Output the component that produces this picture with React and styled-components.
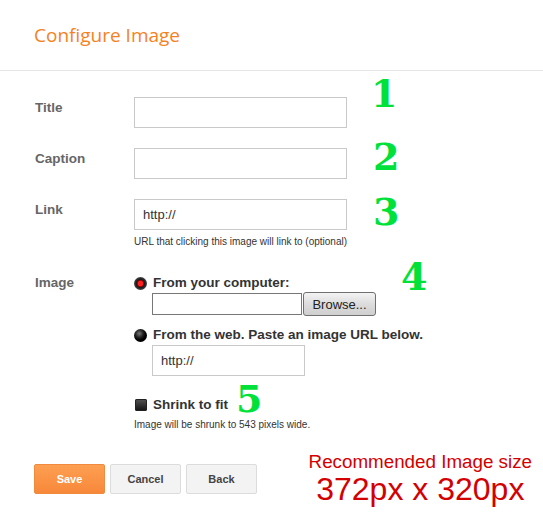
import styled, { createGlobalStyle } from "styled-components";

const GlobalStyle = createGlobalStyle`
  body {
    margin: 0;
    background: #ffffff;
    font-family: "Liberation Sans", Arial, sans-serif;
  }
`;

const App = () => {
  return (
    <Page>
      <GlobalStyle />
      <Header>
        <HeaderTitle>Configure Image</HeaderTitle>
      </Header>

      <Form>
        <Row>
          <Label>Title</Label>
          <TextInput />
        </Row>
        <Row>
          <Label>Caption</Label>
          <TextInput />
        </Row>
        <Row>
          <Label>Link</Label>
          <div>
            <TextInput defaultValue="http://" />
            <Hint>URL that clicking this image will link to (optional)</Hint>
          </div>
        </Row>
        <ImageRow>
          <Label $flat>Image</Label>
          <div>
            <Option>
              <Radio $checked />
              From your computer:
            </Option>
            <FileRow>
              <FileBox />
              <BrowseButton>Browse...</BrowseButton>
            </FileRow>
            <Option $gap={11}>
              <Radio />
              From the web. Paste an image URL below.
            </Option>
            <WebInput defaultValue="http://" />
            <Option $gap={21}>
              <Check />
              Shrink to fit
            </Option>
            <Hint $gap={6}>Image will be shrunk to 543 pixels wide.</Hint>
          </div>
        </ImageRow>
      </Form>

      <Footer>
        <Buttons>
          <Button $primary>Save</Button>
          <Button>Cancel</Button>
          <Button>Back</Button>
        </Buttons>
        <Recommend>
          <RecSmall>Recommended Image size</RecSmall>
          <RecBig>372px x 320px</RecBig>
        </Recommend>
      </Footer>

      <Marker $x={371} $y={74}>1</Marker>
      <Marker $x={373} $y={137}>2</Marker>
      <Marker $x={373} $y={192}>3</Marker>
      <Marker $x={401} $y={257}>4</Marker>
      <Marker $x={236} $y={379}>5</Marker>
    </Page>
  );
};

const Page = styled.div`
  position: relative;
  width: 543px;
  height: 521px;
  overflow: hidden;
`;

const Header = styled.div`
  height: 70px;
  border-bottom: 1px solid #e6e6e6;
  padding: 0 34px;
  display: flex;
  align-items: center;
`;

const HeaderTitle = styled.h1`
  margin: 0;
  font-family: "Open Sans", sans-serif;
  font-weight: 400;
  font-size: 19px;
  color: #f5821f;
`;

const Form = styled.div`
  padding: 26px 0 0 35px;
  display: flex;
  flex-direction: column;
  gap: 20px;
`;

const Row = styled.div`
  display: grid;
  grid-template-columns: 99px 1fr;
`;

const ImageRow = styled(Row)`
  margin-top: 7px;
`;

const Label = styled.div`
  padding-top: ${(p) => (p.$flat ? "0" : "3px")};
  font-size: 13.5px;
  line-height: 16px;
  font-weight: 700;
  color: #666666;
`;

const TextInput = styled.input`
  box-sizing: border-box;
  display: block;
  width: 213px;
  height: 31px;
  margin: 0;
  padding: 0 8px;
  border: 1px solid #c9c9c9;
  font-family: "Liberation Sans", Arial, sans-serif;
  font-size: 13px;
  color: #333333;
  outline: none;
`;

const Hint = styled.div`
  margin-top: ${(p) => p.$gap ?? 6}px;
  font-size: 10px;
  line-height: 12px;
  color: #333333;
`;

const Option = styled.div`
  display: flex;
  align-items: center;
  gap: 6px;
  margin-top: ${(p) => p.$gap ?? 0}px;
  font-size: 13.5px;
  line-height: 16px;
  font-weight: 700;
  color: #333333;
`;

const Radio = styled.span`
  width: 13px;
  height: 13px;
  border-radius: 50%;
  flex: none;
  background: ${(p) =>
    p.$checked
      ? "radial-gradient(circle at 50% 50%, #ff2020 0 2.5px, #b00000 3px, #1a1a1a 4px, #444 6.5px)"
      : "radial-gradient(circle at 40% 35%, #777 0, #222 4px, #000 6.5px)"};
`;

const Check = styled.span`
  width: 12px;
  height: 12px;
  border-radius: 2px;
  flex: none;
  margin-left: 1px;
  background: linear-gradient(#555, #111);
  box-shadow: inset 0 0 0 1px #222;
`;

const FileRow = styled.div`
  display: flex;
  align-items: center;
  margin: 1px 0 0 18px;
  height: 24px;
`;

const FileBox = styled.div`
  box-sizing: border-box;
  width: 150px;
  height: 22px;
  border: 1px solid #777777;
  background: #fff;
`;

const BrowseButton = styled.button`
  box-sizing: border-box;
  width: 73px;
  height: 24px;
  margin-left: 1px;
  padding: 0;
  border: 1px solid #707070;
  border-radius: 3px;
  background: linear-gradient(#f4f4f4, #dcdcdc 50%, #cfcfcf);
  font-family: "Liberation Sans", Arial, sans-serif;
  font-size: 13px;
  color: #222222;
`;

const WebInput = styled(TextInput)`
  width: 153px;
  margin: 2px 0 0 18px;
`;

const Footer = styled.div`
  display: flex;
  justify-content: space-between;
  align-items: center;
  padding: 0 11px 0 34px;
  margin-top: 21px;
`;

const Buttons = styled.div`
  display: flex;
  gap: 5px;
`;

const Button = styled.button`
  box-sizing: border-box;
  width: 71px;
  height: 30px;
  padding: 0;
  border-radius: 2px;
  border: 1px solid ${(p) => (p.$primary ? "#f08a3c" : "#dcdcdc")};
  background: ${(p) =>
    p.$primary ? "linear-gradient(#fd9f52, #f7883a)" : "#f3f3f3"};
  color: ${(p) => (p.$primary ? "#ffffff" : "#444444")};
  font-family: "Liberation Sans", Arial, sans-serif;
  font-size: 11px;
  font-weight: 700;
`;

const Recommend = styled.div`
  text-align: center;
  color: #d40000;
`;

const RecSmall = styled.div`
  font-size: 18.8px;
  line-height: 20px;
`;

const RecBig = styled.div`
  font-size: 32px;
  line-height: 34px;
`;

const Marker = styled.div`
  position: absolute;
  left: ${(p) => p.$x}px;
  top: ${(p) => p.$y}px;
  font-family: "DejaVu Serif", serif;
  font-weight: 700;
  font-size: 38px;
  line-height: 40px;
  color: #00e23a;
`;

export default App;
